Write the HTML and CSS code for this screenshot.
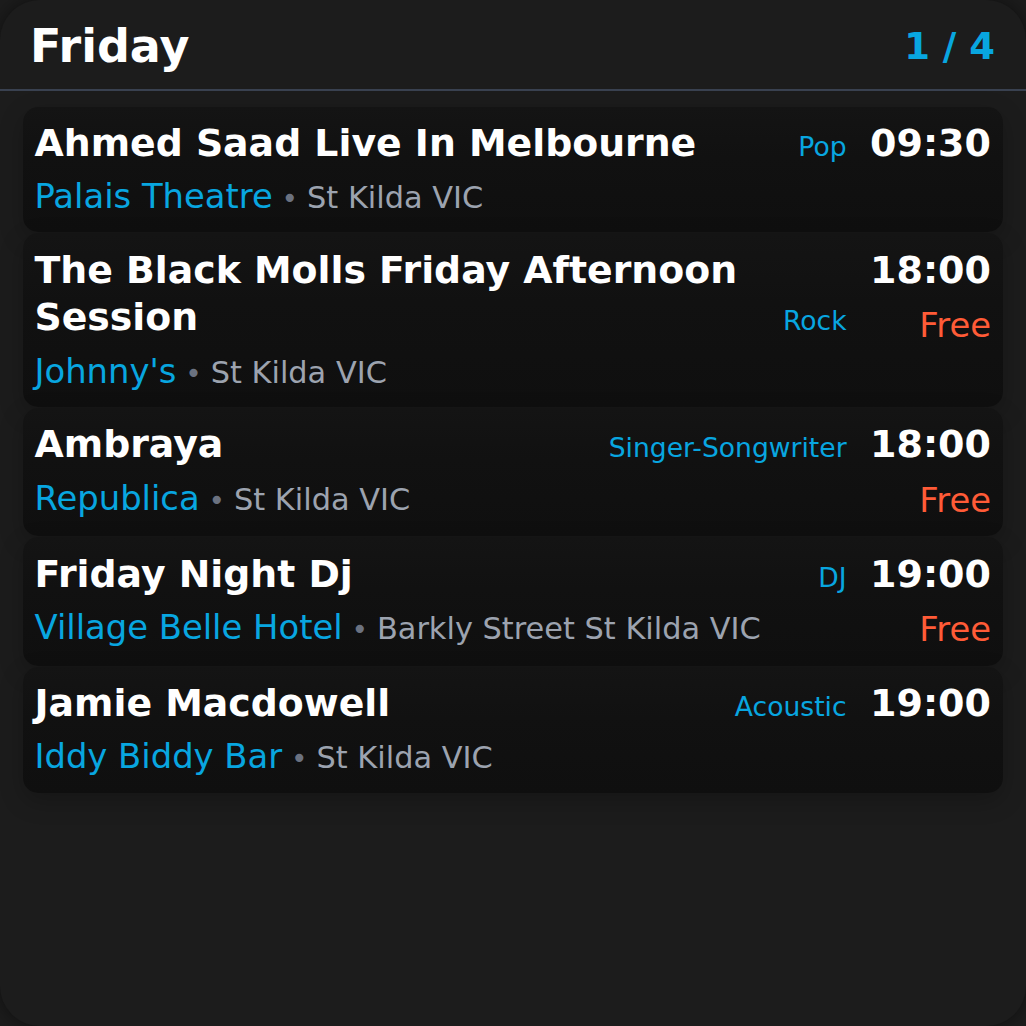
FILE: index.html
```html
<!DOCTYPE html>
<html lang="en">
<head>
<meta charset="utf-8">
<title>Friday</title>
<link rel="stylesheet" href="styles.css">
</head>
<body>
<div class="widget">
  <header class="header">
    <h1 class="day">Friday</h1>
    <div class="pager">1 / 4</div>
  </header>
  <div class="list">
    <div class="card">
      <div class="main">
        <div class="top">
          <div class="title">Ahmed Saad Live In Melbourne</div>
          <div class="genre">Pop</div>
        </div>
        <div class="venue"><span class="vname">Palais Theatre</span><span class="dot"> • </span><span class="loc">St Kilda VIC</span></div>
      </div>
      <div class="side">
        <div class="time">09:30</div>
      </div>
    </div>
    <div class="card">
      <div class="main">
        <div class="top">
          <div class="title">The Black Molls Friday Afternoon Session</div>
          <div class="genre">Rock</div>
        </div>
        <div class="venue"><span class="vname">Johnny's</span><span class="dot"> • </span><span class="loc">St Kilda VIC</span></div>
      </div>
      <div class="side">
        <div class="time">18:00</div>
        <div class="price">Free</div>
      </div>
    </div>
    <div class="card">
      <div class="main">
        <div class="top">
          <div class="title">Ambraya</div>
          <div class="genre">Singer-Songwriter</div>
        </div>
        <div class="venue"><span class="vname">Republica</span><span class="dot"> • </span><span class="loc">St Kilda VIC</span></div>
      </div>
      <div class="side">
        <div class="time">18:00</div>
        <div class="price">Free</div>
      </div>
    </div>
    <div class="card">
      <div class="main">
        <div class="top">
          <div class="title">Friday Night Dj</div>
          <div class="genre">DJ</div>
        </div>
        <div class="venue"><span class="vname">Village Belle Hotel</span><span class="dot"> • </span><span class="loc">Barkly Street St Kilda VIC</span></div>
      </div>
      <div class="side">
        <div class="time">19:00</div>
        <div class="price">Free</div>
      </div>
    </div>
    <div class="card">
      <div class="main">
        <div class="top">
          <div class="title">Jamie Macdowell</div>
          <div class="genre">Acoustic</div>
        </div>
        <div class="venue"><span class="vname">Iddy Biddy Bar</span><span class="dot"> • </span><span class="loc">St Kilda VIC</span></div>
      </div>
      <div class="side">
        <div class="time">19:00</div>
      </div>
    </div>
  </div>
</div>
</body>
</html>
```

FILE: styles.css
```css
html, body {
  margin: 0;
  padding: 0;
  background: #1c1c1c;
}

body {
  font-family: "DejaVu Sans", "Liberation Sans", sans-serif;
  color: #ffffff;
}

.widget {
  width: 1026px;
  height: 1026px;
  box-sizing: border-box;
  background: #1c1c1c;
  border-radius: 40px;
  box-shadow: 0 0 18px rgba(0, 0, 0, 0.45);
  overflow: hidden;
}

.header {
  display: flex;
  justify-content: space-between;
  align-items: center;
  padding: 19px 31px 15.5px 30px;
  border-bottom: 2px solid #394150;
}

.day {
  margin: 0;
  font-size: 46px;
  font-weight: 700;
  line-height: normal;
  color: #ffffff;
}

.pager {
  font-size: 37px;
  font-weight: 700;
  color: #08a6e0;
}

.list {
  display: flex;
  flex-direction: column;
  gap: 1px;
  padding: 16px 23px 0;
}

.card {
  display: flex;
  gap: 22.8px;
  padding: 13.5px 12px 13.3px 11.5px;
  border-radius: 15px;
  background: linear-gradient(180deg, #141414 0%, #111111 40%, #0f0f0f 100%);
  box-shadow: 0 8px 24px rgba(0, 0, 0, 0.22);
}

.main {
  flex: 1;
  min-width: 0;
}

.top {
  display: flex;
  align-items: last baseline;
  gap: 22.8px;
}

.title {
  flex: 1;
  font-size: 37.8px;
  font-weight: 700;
  line-height: 47.5px;
  color: #ffffff;
}

.genre {
  font-size: 26.6px;
  line-height: 1.2;
  color: #08a6e0;
  white-space: nowrap;
}

.venue {
  margin-top: 7.7px;
  font-size: 33.8px;
  line-height: 44px;
  white-space: nowrap;
}

.vname {
  color: #08a6e0;
}

.dot {
  font-size: 28px;
  line-height: 1;
  color: #6b7280;
}

.loc {
  font-size: 30.4px;
  line-height: 1;
  color: #9ca3af;
}

.side {
  flex: 0 0 121.6px;
  text-align: right;
}

.time {
  font-size: 38px;
  font-weight: 700;
  line-height: 47.5px;
  color: #ffffff;
}

.price {
  margin-top: 10px;
  font-size: 33.8px;
  line-height: 44px;
  color: #ff5b37;
}
```
